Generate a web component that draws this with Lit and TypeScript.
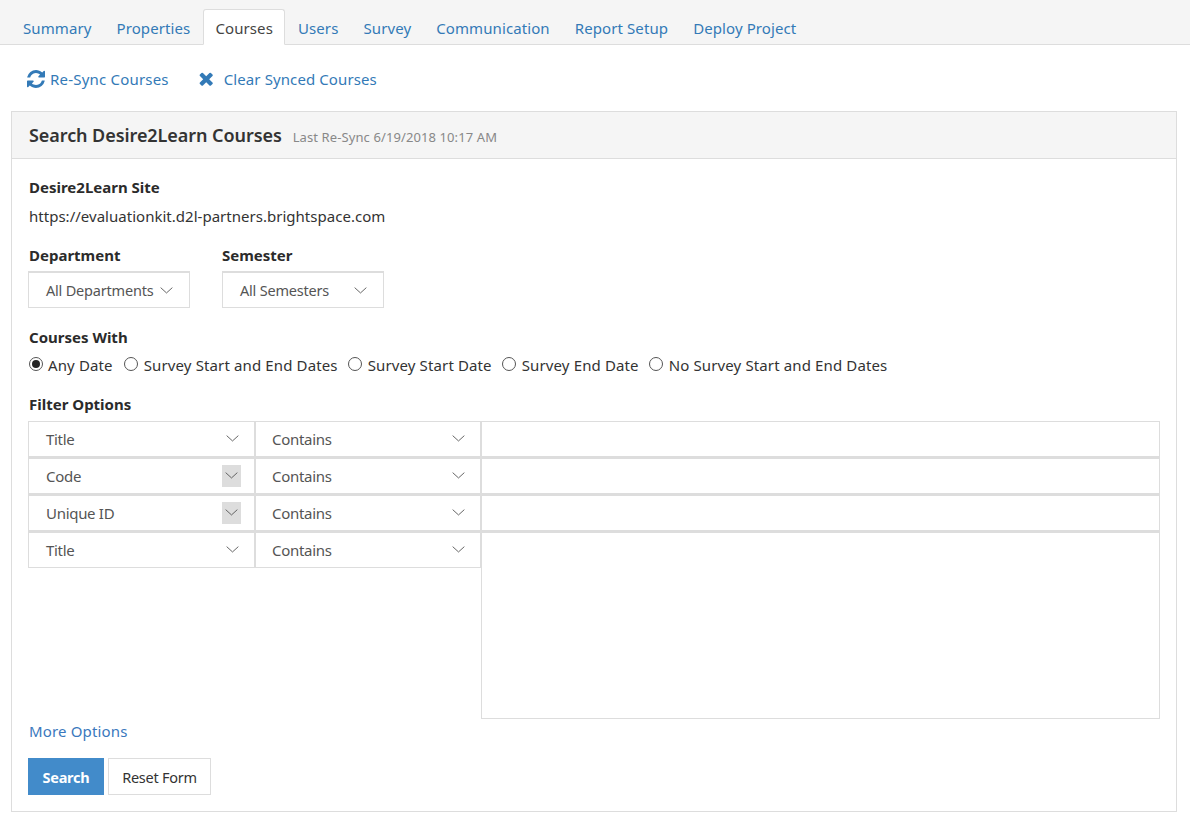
import { LitElement, html, css } from "lit";
import { customElement } from "lit/decorators.js";

const chevron = html`<svg class="chev" width="13" height="7" viewBox="0 0 14 8" preserveAspectRatio="none"><path d="M0.7 0.7 L7 6.8 L13.3 0.7" fill="none" stroke="#555" stroke-width="1"/></svg>`;

@customElement("app-root")
export class AppRoot extends LitElement {
  static styles = css`
    :host { display: block; width: 1190px; height: 824px; background: #fff; color: #333; font-family: "Noto Sans", "Open Sans", sans-serif; font-size: 15px; overflow: hidden; }
    * { box-sizing: border-box; }
    .tabs { display: flex; height: 45px; background: #f5f5f5; border-bottom: 1px solid #ddd; padding: 9px 0 0 11px; }
    .tab { height: 36px; padding: 0 11px; margin-right: 1px; line-height: 36px; color: #337ab7; border: 1px solid transparent; white-space: nowrap; letter-spacing: 0.1px; }
    .tab.active { color: #444; background: #fff; border-color: #ddd; border-bottom-color: #fff; border-radius: 3px 3px 0 0; }
    .actions { display: flex; height: 66px; align-items: center; padding: 1px 0 0 27px; color: #337ab7; letter-spacing: 0.2px; }
    .action { display: flex; align-items: center; }
    .action svg { display: block; }
    .a1 { gap: 5px; margin-right: 28px; }
    .a2 { gap: 10px; letter-spacing: 0.1px; }
    .panel { margin: 0 13px 0 11px; height: 701px; border: 1px solid #ddd; }
    .phead { height: 47px; background: #f5f5f5; border-bottom: 1px solid #ddd; display: flex; align-items: center; padding: 0 17px; }
    .phead h1 { margin: 0; font-size: 18px; font-weight: 600; color: #333; letter-spacing: -0.07px; }
    .phead small { margin-left: 11px; font-size: 13px; color: #888; padding-top: 3px; letter-spacing: 0.1px; }
    .pbody { padding: 18px 16px 0 16px; }
    .label { font-weight: 700; color: #2b2b2b; line-height: 20px; height: 20px; padding-left: 1px; }
    .label.flush { padding-left: 0; }
    .site { line-height: 20px; margin-top: 9px; color: #333; padding-left: 1px; letter-spacing: 0.02px; }
    .dd-row { display: flex; gap: 32px; margin-top: 19px; }
    .dd { height: 37px; margin-top: 6px; border: 1px solid #ddd; border-top-width: 2px; display: flex; align-items: center; justify-content: space-between; color: #555; font-size: 14.5px; letter-spacing: -0.2px; }
    .d1 { width: 162px; padding: 0 16px 0 17px; }
    .d2 { width: 162px; padding: 0 16px 0 17px; }
    .chev { display: block; flex: none; }
    .with { margin-top: 19px; }
    .radios { display: flex; height: 20px; margin-top: 8px; align-items: center; color: #333; letter-spacing: 0.13px; padding-left: 1px; }
    .radio { display: flex; align-items: center; gap: 5.5px; margin-right: 10.5px; white-space: nowrap; }
    .radio:first-child { gap: 5px; margin-right: 11.5px; }
    .dot { width: 14px; height: 14px; border: 1px solid #555; border-radius: 50%; display: flex; align-items: center; justify-content: center; flex: none; margin-bottom: 2px; }
    .dot.on::after { content: ""; width: 8px; height: 8px; border-radius: 50%; background: #222; }
    .filter-label { margin-top: 19px; }
    .grid { display: grid; grid-template-columns: 228px 225px 679px; grid-template-rows: 37px 37px 37px auto; margin-top: 7px; }
    .sel { height: 37px; border: 1px solid #ddd; border-bottom-width: 2px; border-right-width: 2px; border-left-width: 1px; display: flex; align-items: center; justify-content: space-between; padding: 0 15px 0 17px; color: #555; letter-spacing: -0.3px; }
    .sel .chev { margin-bottom: 2px; }
    .sel.c2 { padding-left: 16px; border-left-width: 0; border-right-width: 1px; }
    .sel.last { height: 36px; border-bottom-width: 1px; }
    .box { display: flex; align-items: center; justify-content: center; width: 19px; height: 22px; margin-right: -2px; margin-bottom: 1px; background: #ddd; }
    .box .chev { margin-bottom: 0; }
    .inp { height: 37px; border: 1px solid #ddd; border-bottom-width: 2px; border-left-width: 1px; }
    .ta { height: 187px; border: 1px solid #ddd; border-top-width: 1px; }
    .more { color: #3a78bd; margin-top: 2px; line-height: 20px; padding-left: 1px; letter-spacing: 0.15px; }
    .btns { display: flex; gap: 4px; margin-top: 17px; margin-left: 0; }
    .btn { height: 37px; display: flex; align-items: center; justify-content: center; font-size: 14.5px; letter-spacing: -0.25px; }
    .primary { width: 76px; background: #428bca; color: #fff; font-weight: 700; }
    .plain { width: 103px; border: 1px solid #ddd; color: #333; }
  `;

  private sel(t: string, boxed = false, last = false) {
    return html`<div class="sel ${last ? "last" : ""}"><span>${t}</span>${boxed ? html`<span class="box">${chevron}</span>` : chevron}</div>`;
  }
  private contains(last = false) {
    return html`<div class="sel c2 ${last ? "last" : ""}"><span>Contains</span>${chevron}</div>`;
  }

  render() {
    const tabs = ["Summary", "Properties", "Courses", "Users", "Survey", "Communication", "Report Setup", "Deploy Project"];
    const radios = ["Any Date", "Survey Start and End Dates", "Survey Start Date", "Survey End Date", "No Survey Start and End Dates"];
    return html`
      <div class="tabs">${tabs.map((t) => html`<div class="tab ${t === "Courses" ? "active" : ""}">${t}</div>`)}</div>
      <div class="actions">
        <div class="action a1">
          <svg width="18" height="18" viewBox="0 0 1536 1536"><path fill="#337ab7" d="M1511 928q0 5-1 7-64 268-268 434.500t-478 166.500q-146 0-282.500-55t-243.500-157l-129 129q-19 19-45 19t-45-19-19-45v-448q0-26 19-45t45-19h448q26 0 45 19t19 45-19 45l-137 137q71 66 161 102t187 36q134 0 250-65t186-179q11-17 53-117 8-23 30-23h192q13 0 22.500 9.500t9.500 22.500zm25-800v448q0 26-19 45t-45 19h-448q-26 0-45-19t-19-45 19-45l138-138q-148-137-349-137-134 0-250 65t-186 179q-11 17-53 117-8 23-30 23h-199q-13 0-22.500-9.500t-9.500-22.500v-7q65-268 270-434.500t480-166.500q146 0 284 55.500t245 156.500l130-129q19-19 45-19t45 19 19 45z"/></svg>
          <span>Re-Sync Courses</span>
        </div>
        <div class="action a2">
          <svg width="17" height="17" viewBox="64 128 1536 1536"><path fill="#337ab7" d="M1490 1322q0 40-28 68l-136 136q-28 28-68 28t-68-28l-294-294-294 294q-28 28-68 28t-68-28l-136-136q-28-28-28-68t28-68l294-294-294-294q-28-28-28-68t28-68l136-136q28-28 68-28t68 28l294 294 294-294q28-28 68-28t68 28l136 136q28 28 28 68t-28 68l-294 294 294 294q28 28 28 68z"/></svg>
          <span>Clear Synced Courses</span>
        </div>
      </div>
      <div class="panel">
        <div class="phead"><h1>Search Desire2Learn Courses</h1><small>Last Re-Sync 6/19/2018 10:17 AM</small></div>
        <div class="pbody">
          <div class="label">Desire2Learn Site</div>
          <div class="site">https://evaluationkit.d2l-partners.brightspace.com</div>
          <div class="dd-row">
            <div><div class="label">Department</div><div class="dd d1"><span>All Departments</span>${chevron}</div></div>
            <div><div class="label flush">Semester</div><div class="dd d2"><span>All Semesters</span>${chevron}</div></div>
          </div>
          <div class="label with">Courses With</div>
          <div class="radios">${radios.map((r, i) => html`<div class="radio"><span class="dot ${i === 0 ? "on" : ""}"></span><span>${r}</span></div>`)}</div>
          <div class="label filter-label">Filter Options</div>
          <div class="grid">
            ${this.sel("Title")}${this.contains()}<div class="inp"></div>
            ${this.sel("Code", true)}${this.contains()}<div class="inp"></div>
            ${this.sel("Unique ID", true)}${this.contains()}<div class="inp"></div>
            ${this.sel("Title", false, true)}${this.contains(true)}<div class="ta"></div>
          </div>
          <div class="more">More Options</div>
          <div class="btns"><div class="btn primary">Search</div><div class="btn plain">Reset Form</div></div>
        </div>
      </div>
    `;
  }
}
